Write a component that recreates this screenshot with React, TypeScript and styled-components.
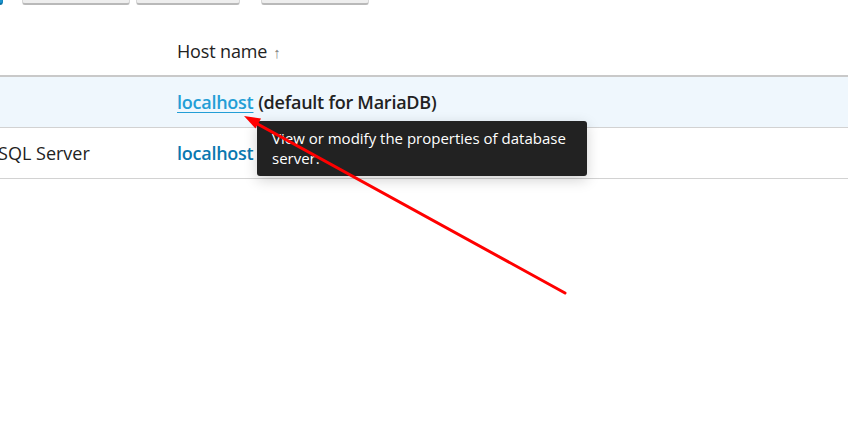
import React from "react";
import styled, { createGlobalStyle } from "styled-components";

const Global = createGlobalStyle`
  html, body { margin: 0; padding: 0; background: #fff; }
  body {
    font-family: "Open Sans", "Noto Sans", sans-serif;
    color: #222;
    width: 848px;
    height: 424px;
    overflow: hidden;
  }
`;

const Page = styled.div`
  position: relative;
  width: 848px;
  height: 424px;
  overflow: hidden;
`;

const Toolbar = styled.div`
  display: flex;
  align-items: flex-start;
  margin-top: -26px;
  margin-left: -60px;
  height: 31px;
`;

const Btn = styled.button<{ $primary?: boolean; $w: number; $gap: number }>`
  box-sizing: border-box;
  width: ${(p) => p.$w}px;
  height: 31px;
  margin-left: ${(p) => p.$gap}px;
  border-radius: 3px;
  border: 1px solid ${(p) => (p.$primary ? "#1585bd" : "#d6d6d6")};
  border-bottom: 2px solid ${(p) => (p.$primary ? "#0e6f9f" : "#b9b9b9")};
  background: ${(p) => (p.$primary ? "#1c95cf" : "#eeeeee")};
  padding: 0;
`;

const Table = styled.div`
  margin-left: -86px;
`;

const HeaderRow = styled.div`
  box-sizing: border-box;
  display: grid;
  grid-template-columns: 263px 1fr;
  align-items: end;
  height: 72px;
  padding-bottom: 11px;
  border-bottom: 2px solid #c9c9c9;
`;

const HeaderCell = styled.div`
  font-size: 18px;
  line-height: 24px;
  color: #222;
  letter-spacing: -0.15px;
`;

const SortArrow = styled.span`
  font-size: 15px;
  color: #808080;
  margin-left: 6px;
`;

const Row = styled.div<{ $hover?: boolean }>`
  box-sizing: border-box;
  display: grid;
  grid-template-columns: 263px 1fr;
  align-items: center;
  height: 51px;
  border-bottom: 1px solid #d2d2d2;
  background: ${(p) => (p.$hover ? "#eff7fd" : "#fff")};
  font-size: 18px;
  line-height: 24px;
`;

const Cell = styled.div`
  white-space: nowrap;
  color: #222;
`;

const HostLink = styled.a<{ $hover?: boolean }>`
  font-weight: 600;
  letter-spacing: -0.25px;
  color: ${(p) => (p.$hover ? "#239ed6" : "#0a78b0")};
  text-decoration: ${(p) => (p.$hover ? "underline" : "none")};
  text-underline-offset: 3px;
  text-decoration-thickness: 1px;
  cursor: pointer;
`;

const Note = styled.span`
  font-weight: 600;
  letter-spacing: -0.25px;
  color: #222;
`;

const Tooltip = styled.div`
  position: absolute;
  left: 257px;
  top: 121px;
  box-sizing: border-box;
  width: 330px;
  padding: 7px 15px 8px;
  background: #222;
  color: #fff;
  font-size: 15px;
  line-height: 20px;
  border-radius: 3px;
  box-shadow: 0 4px 14px rgba(0, 0, 0, 0.18);
`;

const Annotation = styled.svg`
  position: absolute;
  left: 0;
  top: 0;
  pointer-events: none;
`;

export default function App() {
  return (
    <Page>
      <Global />
      <Toolbar>
        <Btn $primary $w={63} $gap={0} />
        <Btn $w={108} $gap={19} />
        <Btn $w={104} $gap={6} />
        <Btn $w={108} $gap={21} />
      </Toolbar>
      <Table>
        <HeaderRow>
          <HeaderCell />
          <HeaderCell>
            Host name<SortArrow>↑</SortArrow>
          </HeaderCell>
        </HeaderRow>
        <Row $hover>
          <Cell />
          <Cell>
            <HostLink $hover>localhost</HostLink> <Note>(default for MariaDB)</Note>
          </Cell>
        </Row>
        <Row>
          <Cell>Microsoft SQL Server</Cell>
          <Cell>
            <HostLink>localhost</HostLink>
          </Cell>
        </Row>
      </Table>
      <Tooltip>View or modify the properties of database server.</Tooltip>
      <Annotation width="848" height="424" viewBox="0 0 848 424">
        <line x1="565" y1="293" x2="254" y2="122" stroke="#ff0000" strokeWidth="3" strokeLinecap="round" />
        <polygon points="244,116 255.5,128.5 261,118.5" fill="#ff0000" />
      </Annotation>
    </Page>
  );
}
